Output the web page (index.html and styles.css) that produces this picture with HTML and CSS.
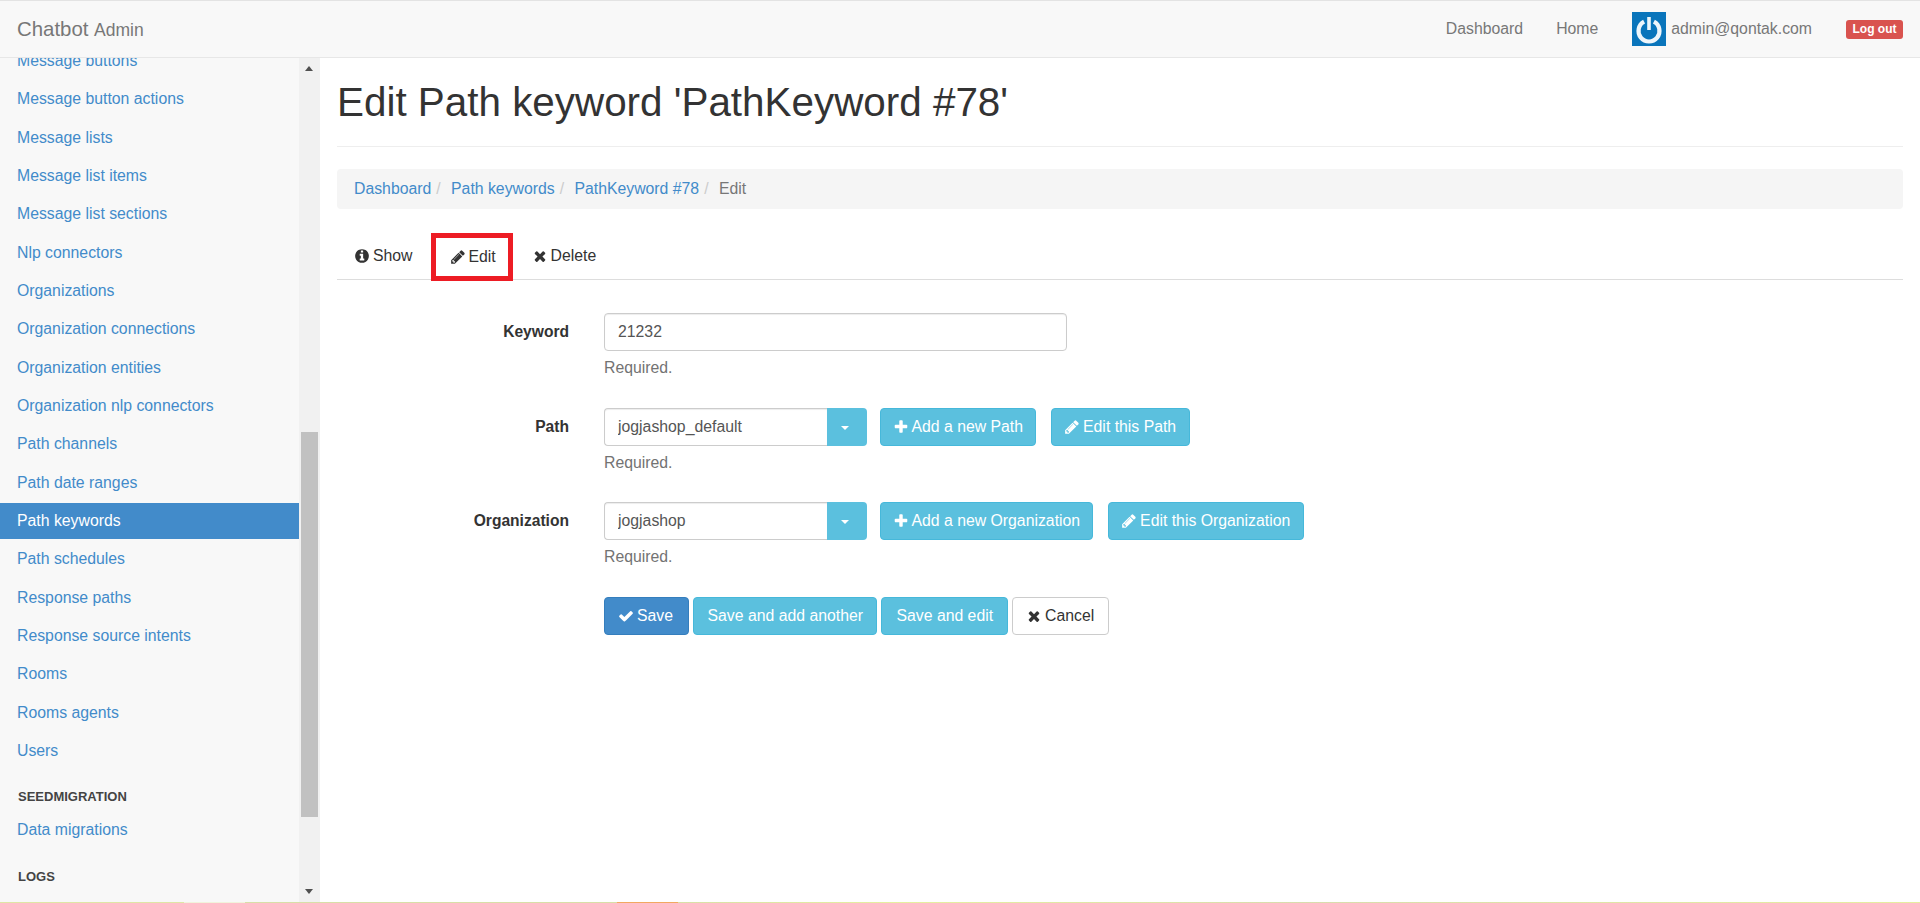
FILE: index.html
```html
<!DOCTYPE html>
<html>
<head>
    <title>Chatbot Admin</title>
    <link rel="stylesheet" href="styles.css">
</head>
<body>
    <svg class="defs" width="0" height="0">
        <symbol id="i-pencil" viewBox="0 0 1792 1792"><path d="M491 1536l91-91-235-235-91 91v107h128v128h107zm523-928q0-22-22-22-10 0-17 7l-542 542q-7 7-7 17 0 22 22 22 10 0 17-7l542-542q7-7 7-17zm-54-192l416 416-832 832h-416v-416zm683 96q0 53-37 90l-166 166-416-416 166-165q36-38 90-38 53 0 91 38l235 234q37 39 37 91z"/></symbol>
        <symbol id="i-check" viewBox="0 0 1792 1792"><path d="M1671 566q0 40-28 68l-724 724-136 136q-28 28-68 28t-68-28l-136-136-362-362q-28-28-28-68t28-68l136-136q28-28 68-28t68 28l294 295 656-657q28-28 68-28t68 28l136 136q28 28 28 68z"/></symbol>
        <symbol id="i-times" viewBox="0 0 1792 1792"><path d="M1490 1322q0 40-28 68l-136 136q-28 28-68 28t-68-28l-294-294-294 294q-28 28-68 28t-68-28l-136-136q-28-28-28-68t28-68l294-294-294-294q-28-28-28-68t28-68l136-136q28-28 68-28t68 28l294 294 294-294q28-28 68-28t68 28l136 136q28 28 28 68t-28 68l-294 294 294 294q28 28 28 68z"/></symbol>
        <symbol id="i-plus" viewBox="0 0 1792 1792"><path d="M1600 736v192q0 40-28 68t-68 28h-416v416q0 40-28 68t-68 28h-192q-40 0-68-28t-28-68v-416h-416q-40 0-68-28t-28-68v-192q0-40 28-68t68-28h416v-416q0-40 28-68t68-28h192q40 0 68 28t28 68v416h416q40 0 68 28t28 68z"/></symbol>
        <symbol id="i-info" viewBox="0 0 1792 1792"><path d="M1152 1376v-160q0-14-9-23t-23-9h-96v-512q0-14-9-23t-23-9h-320q-14 0-23 9t-9 23v160q0 14 9 23t23 9h96v320h-96q-14 0-23 9t-9 23v160q0 14 9 23t23 9h448q14 0 23-9t9-23zm-128-896v-160q0-14-9-23t-23-9h-192q-14 0-23 9t-9 23v160q0 14 9 23t23 9h192q14 0 23-9t9-23zm640 416q0 209-103 385.5t-279.5 279.5-385.5 103-385.5-103-279.5-279.5-103-385.5 103-385.5 279.5-279.5 385.5-103 385.5 103 279.5 279.5 103 385.5z"/></symbol>
    </svg>

    <header class="topbar">
        <a class="brand" href="#">Chatbot <small>Admin</small></a>
        <nav class="topnav">
            <a href="#">Dashboard</a>
            <a href="#">Home</a>
            <span class="user">
                <svg class="avatar" viewBox="0 0 34 34">
                    <rect width="34" height="34" fill="#0a75bb"/>
                    <g class="avatar-mark">
                        <path d="M12.1 9.7A10.5 10.5 0 1 0 21.9 9.7" fill="none" stroke="#eef6fb" stroke-width="4.2"/>
                        <path d="M17 5v13" stroke="#eef6fb" stroke-width="3.6"/>
                    </g>
                </svg>
                admin@qontak.com
            </span>
            <a class="logout" href="#">Log out</a>
        </nav>
    </header>

    <div class="layout">
        <aside class="sidebar">
            <div class="side-list">
                <a class="side-link" href="#">Message buttons</a>
                <a class="side-link" href="#">Message button actions</a>
                <a class="side-link" href="#">Message lists</a>
                <a class="side-link" href="#">Message list items</a>
                <a class="side-link" href="#">Message list sections</a>
                <a class="side-link" href="#">Nlp connectors</a>
                <a class="side-link" href="#">Organizations</a>
                <a class="side-link" href="#">Organization connections</a>
                <a class="side-link" href="#">Organization entities</a>
                <a class="side-link" href="#">Organization nlp connectors</a>
                <a class="side-link" href="#">Path channels</a>
                <a class="side-link" href="#">Path date ranges</a>
                <a class="side-link active" href="#">Path keywords</a>
                <a class="side-link" href="#">Path schedules</a>
                <a class="side-link" href="#">Response paths</a>
                <a class="side-link" href="#">Response source intents</a>
                <a class="side-link" href="#">Rooms</a>
                <a class="side-link" href="#">Rooms agents</a>
                <a class="side-link" href="#">Users</a>
                <div class="side-head">SEEDMIGRATION</div>
                <a class="side-link" href="#">Data migrations</a>
                <div class="side-head">LOGS</div>
            </div>
            <div class="scrollbar">
                <div class="arrow-up"></div>
                <div class="thumb"></div>
                <div class="arrow-down"></div>
            </div>
        </aside>

        <main class="content">
            <h1 class="page-title">Edit Path keyword 'PathKeyword #78'</h1>

            <div class="breadcrumb">
                <a href="#">Dashboard</a><span class="sep">/</span>
                <a href="#">Path keywords</a><span class="sep">/</span>
                <a href="#">PathKeyword #78</a><span class="sep">/</span>
                <span class="current">Edit</span>
            </div>

            <div class="tabs">
                <a class="tab tab-show" href="#"><svg class="ico"><use href="#i-info"/></svg>Show</a>
                <a class="tab tab-marked" href="#"><svg class="ico"><use href="#i-pencil"/></svg>Edit</a>
                <a class="tab tab-delete" href="#"><svg class="ico"><use href="#i-times"/></svg>Delete</a>
            </div>

            <form class="form">
                <div class="row">
                    <label class="row-label">Keyword</label>
                    <div class="row-body">
                        <div class="control"><input class="input input-wide" value="21232"></div>
                        <p class="help">Required.</p>
                    </div>
                </div>

                <div class="row">
                    <label class="row-label">Path</label>
                    <div class="row-body">
                        <div class="control">
                            <input class="input input-combo" value="jogjashop_default">
                            <span class="caret-btn"><i class="caret"></i></span>
                            <a class="btn btn-info first" href="#"><svg class="ico"><use href="#i-plus"/></svg>Add a new Path</a>
                            <a class="btn btn-info second" href="#"><svg class="ico"><use href="#i-pencil"/></svg>Edit this Path</a>
                        </div>
                        <p class="help">Required.</p>
                    </div>
                </div>

                <div class="row">
                    <label class="row-label">Organization</label>
                    <div class="row-body">
                        <div class="control">
                            <input class="input input-combo" value="jogjashop">
                            <span class="caret-btn"><i class="caret"></i></span>
                            <a class="btn btn-info first" href="#"><svg class="ico"><use href="#i-plus"/></svg>Add a new Organization</a>
                            <a class="btn btn-info second" href="#"><svg class="ico"><use href="#i-pencil"/></svg>Edit this Organization</a>
                        </div>
                        <p class="help">Required.</p>
                    </div>
                </div>

                <div class="row actions">
                    <div class="row-label"></div>
                    <div class="control action-btns">
                        <a class="btn btn-primary" href="#"><svg class="ico"><use href="#i-check"/></svg>Save</a>
                        <a class="btn btn-info btn-another" href="#">Save and add another</a>
                        <a class="btn btn-info" href="#">Save and edit</a>
                        <a class="btn btn-default" href="#"><svg class="ico"><use href="#i-times"/></svg>Cancel</a>
                    </div>
                </div>
            </form>
        </main>
    </div>

    <div class="bottom-strip"></div>
</body>
</html>
```

FILE: styles.css
```css
html, body {
    height: 100%;
}
body {
    margin: 0;
    display: flex;
    flex-direction: column;
    overflow: hidden;
    font-family: "Liberation Sans", Arial, sans-serif;
    font-size: 15.8px;
    color: #333;
    background: #fff;
}
a {
    text-decoration: none;
    color: #428bca;
}
.defs {
    display: none;
}
.ico {
    width: 16px;
    height: 16px;
    fill: currentColor;
    margin-right: 3px;
    flex: none;
}

/* top bar */
.topbar {
    height: 56px;
    flex: none;
    display: flex;
    align-items: center;
    justify-content: space-between;
    padding: 0 17px;
    background: #f8f8f8;
    border-top: 1px solid #e3e3e3;
    border-bottom: 1px solid #e7e7e7;
}
.brand {
    font-size: 20.4px;
    color: #777;
}
.brand small {
    font-size: 17.5px;
}
.topnav {
    display: flex;
    align-items: center;
    color: #777;
}
.topnav a {
    color: #777;
}
.topnav a + a {
    margin-left: 33px;
}
.user {
    display: flex;
    align-items: center;
    margin-left: 34px;
}
.avatar {
    width: 34px;
    height: 34px;
    margin-right: 5px;
}
.avatar-mark {
    filter: blur(0.5px);
}
.topnav .logout {
    margin-left: 34px;
    width: 57px;
    height: 19px;
    line-height: 19px;
    text-align: center;
    font-size: 12px;
    font-weight: bold;
    color: #fff;
    background: #d9534f;
    border-radius: 3px;
}

/* sidebar */
.layout {
    flex: 1;
    display: flex;
    min-height: 0;
}
.sidebar {
    width: 320px;
    flex: none;
    display: flex;
    background: #f8f8f8;
    overflow: hidden;
}
.side-list {
    flex: 1;
    margin-top: -16px;
}
.side-link {
    display: block;
    height: 38.33px;
    line-height: 38.33px;
    padding-left: 17px;
}
.side-link.active {
    height: 36px;
    line-height: 36px;
    margin: 1px 0 1.33px;
    color: #fff;
    background: #428bca;
}
.side-head {
    height: 20px;
    line-height: 20px;
    padding-left: 18px;
    font-size: 13px;
    font-weight: bold;
    color: #444;
    margin-top: 16px;
}
.side-head + .side-link {
    margin-top: 4px;
}
.side-link + .side-head {
    margin-top: 17px;
}
.scrollbar {
    width: 21px;
    flex: none;
    background: #f1f1f1;
    position: relative;
}
.thumb {
    width: 17px;
    height: 385px;
    margin: 374px 0 0 2px;
    background: #c1c1c1;
}
.arrow-up, .arrow-down {
    position: absolute;
    left: 6px;
    width: 0;
    height: 0;
    border-left: 4.5px solid transparent;
    border-right: 4.5px solid transparent;
}
.arrow-up {
    top: 8px;
    border-bottom: 5px solid #505050;
}
.arrow-down {
    bottom: 8px;
    border-top: 5px solid #505050;
}

/* main */
.content {
    flex: 1;
    padding: 0 17px;
    min-width: 0;
}
.page-title {
    margin: 22px 0 0;
    padding-bottom: 22px;
    line-height: 44px;
    font-size: 40.4px;
    font-weight: normal;
    color: #333;
    border-bottom: 1px solid #eee;
}
.breadcrumb {
    margin-top: 22px;
    height: 40px;
    line-height: 40px;
    padding-left: 17px;
    background: #f5f5f5;
    border-radius: 4px;
}
.sep {
    color: #ccc;
    padding: 0 6px 0 5px;
}
.current {
    color: #777;
}
.tabs {
    margin-top: 23px;
    height: 47px;
    display: flex;
    border-bottom: 1px solid #ddd;
}
.tab {
    display: flex;
    align-items: center;
    height: 48px;
    padding: 0 18px;
    color: #333;
}
.tab-show {
    padding-left: 17px;
}
.tab-marked {
    box-sizing: border-box;
    height: 48px;
    width: 82px;
    margin-top: 1px;
    padding: 0 10px 0 14px;
    border: 5px solid #ed1c24;
}
.tab-delete {
    padding-left: 19px;
}

/* form */
.form {
    margin-top: 33px;
}
.row {
    display: flex;
    margin-bottom: 26px;
    height: 68.5px;
}
.row-label {
    width: 232px;
    flex: none;
    margin-right: 35px;
    text-align: right;
    line-height: 38px;
    font-size: 15.6px;
    font-weight: bold;
}
.control {
    display: flex;
    height: 38px;
}
.input {
    box-sizing: border-box;
    height: 38px;
    padding: 0 13px;
    font: inherit;
    color: #555;
    border: 1px solid #ccc;
    border-radius: 4px;
    background: #fff;
    box-shadow: inset 0 1px 1px rgba(0, 0, 0, 0.075);
}
.input-wide {
    width: 463px;
}
.input-combo {
    width: 223px;
    border-right: none;
    border-radius: 4px 0 0 4px;
}
.caret-btn {
    box-sizing: border-box;
    display: flex;
    align-items: center;
    justify-content: center;
    width: 40px;
    padding: 2px 4px 0 0;
    background: #5bc0de;
    border-radius: 0 4px 4px 0;
}
.caret {
    width: 0;
    height: 0;
    border-left: 4.5px solid transparent;
    border-right: 4.5px solid transparent;
    border-top: 4px solid #fff;
}
.help {
    margin: 6px 0 0;
    line-height: 22px;
    color: #737373;
}
.btn {
    box-sizing: border-box;
    display: flex;
    align-items: center;
    height: 38px;
    padding: 0 14px;
    border: 1px solid transparent;
    border-radius: 4px;
    white-space: nowrap;
}
.btn-info {
    color: #fff;
    background: #5bc0de;
    border-color: #46b8da;
}
.btn-primary {
    padding: 0 15px 0 13px;
    color: #fff;
    background: #428bca;
    border-color: #357ebd;
}
.btn-another {
    padding: 0 13.5px;
}
.btn-default {
    padding-left: 13px;
    color: #333;
    background: #fff;
    border-color: #ccc;
}
.first {
    margin-left: 13px;
    padding: 0 11.5px;
}
.second {
    margin-left: 15px;
    padding: 0 12.5px;
}
.action-btns {
    gap: 4px;
}
.bottom-strip {
    height: 1px;
    flex: none;
    background: linear-gradient(to right, #dfe6a6 0, #dfe6a6 184px, #f1f3dc 184px, #f1f3dc 245px, #d8dfa8 245px, #d8dfa8 617px, #f2a860 617px, #f2a860 678px, #d8e0a8 678px, #e6f0a0 900px, #d8dcae 1300px, #e6eea0 1920px);
}
```
